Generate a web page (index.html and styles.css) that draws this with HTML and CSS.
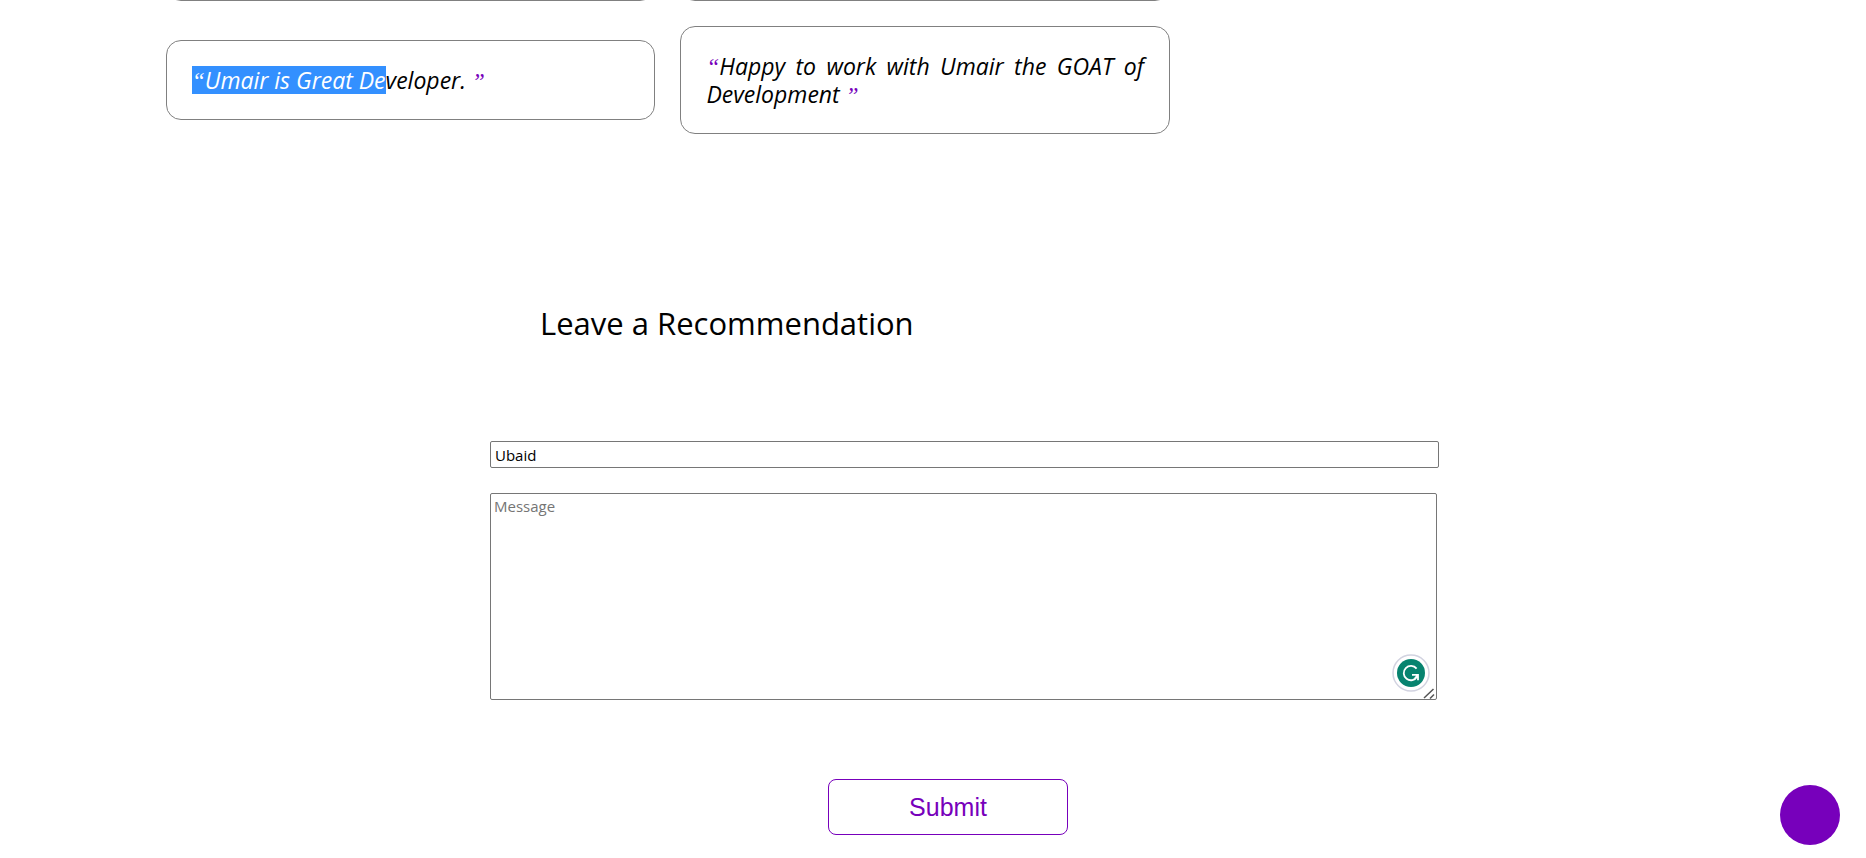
FILE: index.html
```
<!DOCTYPE html>
<html lang="en">
<head>
<meta charset="utf-8">
<title>Recommendations</title>
<link rel="stylesheet" href="styles.css">
</head>
<body>
<main>
  <section class="recommendations">
    <div class="card card-cut"></div>
    <div class="card card-cut"></div>
    <blockquote class="card"><mark><span class="quote">“</span>Umair is Great De</mark>veloper. <span class="quote">”</span></blockquote>
    <blockquote class="card"><span class="quote">“</span>Happy to work with Umair the GOAT of Development <span class="quote">”</span></blockquote>
  </section>
  <form class="form">
    <h2 class="title">Leave a Recommendation</h2>
    <input class="name" type="text" aria-label="Name" value="Ubaid">
    <div class="message-wrap">
      <textarea class="message" aria-label="Message" placeholder="Message"></textarea>
      <svg class="assistant" viewBox="0 0 38 38" aria-hidden="true">
        <circle cx="19" cy="19" r="18" fill="#fff" stroke="#d2d3e0" stroke-width="1.5"/>
        <circle cx="19" cy="19" r="14" fill="#07836f"/>
        <path d="M24.6 14.6A7.2 7.2 0 1 0 25.2 22.6M20 20.8H26V26.2M26 20.8L22.8 24.6" fill="none" stroke="#fff" stroke-width="1.8"/>
      </svg>
      <svg class="grip" viewBox="0 0 12 12" aria-hidden="true">
        <path d="M1 11L10.500 2M7 11.500L11 7.500" fill="none" stroke="#555" stroke-width="1.5"/>
      </svg>
    </div>
    <button class="submit" type="button">Submit</button>
  </form>
</main>
<button class="floating" type="button" aria-label="Back to top"></button>
</body>
</html>
```
FILE: styles.css
```
* {
  box-sizing: border-box;
}

body {
  margin: 0;
  background: #fff;
  color: #000;
  font-family: "Trebuchet MS", "Open Sans", sans-serif;
  overflow: hidden;
}

.recommendations {
  display: grid;
  grid-template-columns: 1fr 1fr;
  gap: 25px;
  align-items: center;
  width: 53.8%;
  margin-left: 166px;
}

.card {
  margin: 0;
  padding: 25px;
  border: 1px solid #808080;
  border-radius: 15px;
  font-size: 23px;
  line-height: 28px;
  font-style: italic;
  text-align: justify;
}

.card-cut {
  height: 52px;
  margin-top: -51px;
}

mark {
  display: inline-block;
  background: #3390ff;
  color: #fff;
}

.quote {
  color: #7700bb;
  font-family: "Liberation Serif", serif;
  line-height: 16px;
}

mark .quote {
  color: #fff;
}

.form {
  display: flex;
  flex-direction: column;
  width: 50.85%;
  margin: 168px 0 0 490px;
}

.title {
  margin: 0 0 97px 50px;
  font-size: 31px;
  font-weight: 400;
  line-height: 42px;
}

.name,
.message {
  display: block;
  width: 100%;
  border: 1px solid #767676;
  border-radius: 2px;
  background: #fff;
  color: #000;
  font-family: inherit;
  font-size: 15px;
  line-height: 21px;
}

.name {
  height: 27px;
  margin-bottom: 25px;
  padding: 1px 4px;
}

.message-wrap {
  position: relative;
  margin-right: 2px;
}

.message {
  height: 207px;
  padding: 2px 3px;
  resize: none;
}

.message::placeholder {
  color: #757575;
}

.assistant {
  position: absolute;
  right: 7px;
  bottom: 8px;
  width: 38px;
  height: 38px;
}

.grip {
  position: absolute;
  right: 2px;
  bottom: 1px;
  width: 12px;
  height: 12px;
}

.submit {
  width: 240px;
  height: 56px;
  margin: 79px 0 0 338px;
  border: 1px solid #7700bb;
  border-radius: 8px;
  background: #fff;
  color: #7700bb;
  font-family: "Liberation Sans", Arial, sans-serif;
  font-size: 25px;
}

.floating {
  position: fixed;
  right: 26px;
  bottom: 13px;
  width: 60px;
  height: 60px;
  border: 0;
  border-radius: 50%;
  background: #7700bb;
}
```
